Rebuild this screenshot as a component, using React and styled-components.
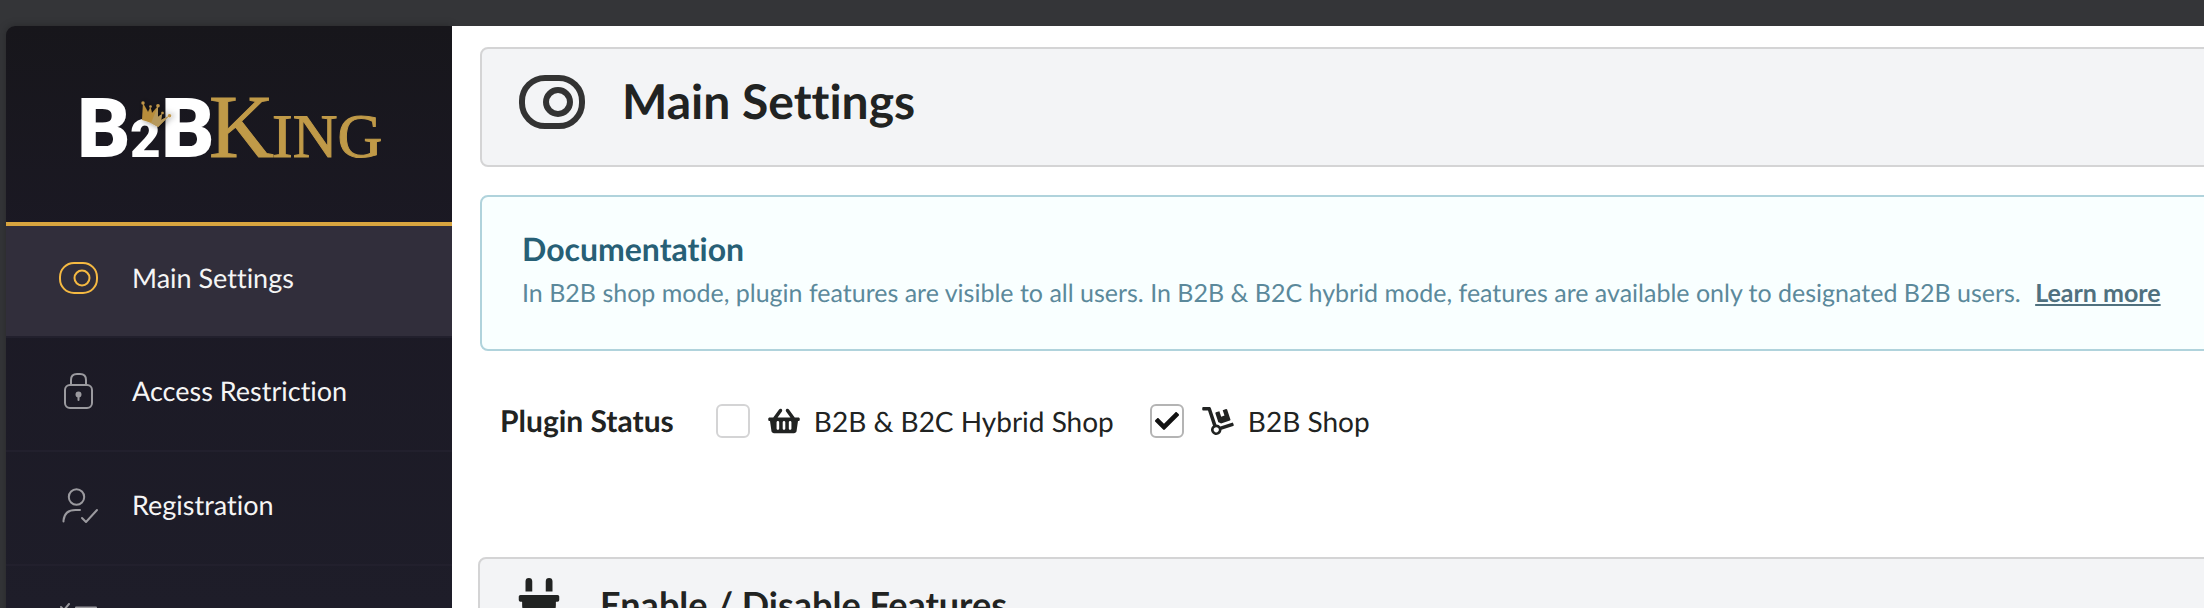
import React, { useState } from "react";
import styled, { createGlobalStyle } from "styled-components";
import { FaCheck, FaDolly, FaPlug, FaShoppingBasket } from "react-icons/fa";

const GlobalStyle = createGlobalStyle`
  * {
    box-sizing: border-box;
  }
  body {
    margin: 0;
    background: #343538;
    font-family: Lato, "Open Sans", sans-serif;
    font-variant-ligatures: none;
    text-rendering: geometricPrecision;
    color: #212322;
  }
  h1, h2, h3, p {
    margin: 0;
  }
`;

const Shell = styled.div`
  display: flex;
  height: 100vh;
  padding: 26px 0 0 6px;
  overflow: hidden;
`;

const Sidebar = styled.aside`
  flex: 0 0 446px;
  height: 1200px;
  border-top-left-radius: 9px;
  background: linear-gradient(#17161b, #1b1924 220px, #1e1d29 580px);
  box-shadow: 0 0 8px rgba(0, 0, 0, 0.25);
`;

const Brand = styled.div`
  display: flex;
  justify-content: center;
  height: 200px;
  padding-top: 32px;
  border-bottom: 4px solid #d8a53f;
  svg {
    width: 330px;
    height: 140px;
  }
  .sans {
    font-family: Roboto, sans-serif;
    font-weight: 900;
    fill: #fff;
  }
  .serif {
    font-family: "Liberation Serif", serif;
    fill: #c09a48;
    stroke: #c09a48;
  }
`;

const NavItem = styled.a`
  display: flex;
  align-items: center;
  height: ${(props) => (props.$active ? 112 : 114)}px;
  padding: 0 24px 6px 50px;
  border-bottom: 2px solid #22202d;
  background: ${(props) => (props.$active ? "#312e3b" : "transparent")};
  color: #f5f5f5;
  font-size: 27px;
  line-height: 32px;
  text-decoration: none;
  svg {
    width: 44px;
    height: 44px;
    margin-right: 32px;
    fill: none;
    stroke: ${(props) => (props.$active ? "#f5b942" : "#9b9a9f")};
    stroke-width: 2;
    stroke-linecap: round;
    stroke-linejoin: round;
  }
`;

const Main = styled.main`
  flex: 1 0 auto;
  width: calc(100% - 446px);
  height: 1200px;
  margin-right: -40px;
  padding: 21px 0 0 26px;
  background: #fff;
`;

const TitleCard = styled.header`
  display: flex;
  align-items: center;
  gap: 36px;
  margin-left: 2px;
  padding: 24px 36px 34px;
  border: 2px solid #d4d4d5;
  border-radius: 8px;
  background: #f3f4f6;
  h1 {
    font-size: 48px;
    line-height: 58px;
  }
  svg {
    width: 68px;
    height: 56px;
    fill: none;
    stroke: #333;
    stroke-width: 6;
  }
`;

const InfoCard = styled.section`
  margin: 28px 0 0 2px;
  padding: 32px 40px 40px;
  border: 2px solid #b0d3dc;
  border-radius: 8px;
  background: #f9ffff;
  color: #5b899b;
  h3 {
    margin-bottom: 8px;
    color: #276076;
    font-size: 32px;
    line-height: 40px;
  }
  p {
    font-size: 25px;
    line-height: 32px;
    white-space: nowrap;
  }
  a {
    margin-left: 8px;
    color: #50717f;
    font-weight: 700;
  }
`;

const StatusRow = styled.div`
  display: flex;
  align-items: center;
  margin: 53px 0 119px 22px;
  font-size: 28px;
  line-height: 34px;
  strong {
    margin-right: 42px;
    font-size: 30px;
  }
`;

const Option = styled.label`
  display: flex;
  align-items: center;
  margin-right: 36px;
  cursor: pointer;
  > svg {
    width: 32px;
    height: 28px;
    margin: 0 14px 0 18px;
  }
`;

const Tick = styled.span`
  display: grid;
  place-items: center;
  input {
    grid-area: 1 / 1;
    appearance: none;
    width: 34px;
    height: 34px;
    margin: 0;
    border: 2px solid #d4d4d5;
    border-radius: 6px;
    background: #fff;
    &:checked {
      border-color: #b4b4b4;
    }
  }
  svg {
    grid-area: 1 / 1;
    z-index: 1;
    width: 24px;
    height: 24px;
    color: #111;
    pointer-events: none;
  }
`;

const FeatureCard = styled.section`
  display: flex;
  align-items: flex-start;
  gap: 40px;
  padding: 19px 38px;
  border: 2px solid #d4d4d5;
  border-radius: 8px;
  background: #f3f4f6;
  h2 {
    padding-top: 4px;
    font-size: 36px;
    line-height: 44px;
  }
  svg {
    width: 42px;
    height: 54px;
  }
`;

const Logo = () => (
  <svg viewBox="0 -30 330 140" role="img" aria-label="B2BKing">
    <defs>
      <filter id="crownShadow" x="-50%" y="-50%" width="200%" height="200%">
        <feDropShadow dx="2" dy="0" stdDeviation="3" floodOpacity="0.6" />
      </filter>
    </defs>
    <text className="sans" x="13" y="69" fontSize="83">B</text>
    <text className="sans" x="66" y="69" fontSize="53">2</text>
    <text className="sans" x="97" y="69" fontSize="83">B</text>
    <text className="serif" x="145" y="69" fontSize="90">K</text>
    <text className="serif" x="208" y="69" fontSize="62">ING</text>
    <g filter="url(#crownShadow)" transform="translate(10 0)">
      <path
        d="M68 32 L69 15 L74 24 L76.500 19 L78 25 L84 18 L84 29 L88 26 L87 32 L95 28 L84 39 Q77 34 68 32z"
        fill="#b88d3b"
      />
      <path d="M77 35 L84 18 L84 29 L88 26 L87 32 L95 28 L84 39z" fill="#b5985c" />
      <g fill="#c0964a">
        <circle cx="69" cy="15" r="1.700" />
        <circle cx="76.500" cy="18.500" r="1.300" />
        <circle cx="84" cy="17.700" r="1.800" />
        <circle cx="88.500" cy="25" r="1.300" />
        <circle cx="95.500" cy="27.700" r="1.800" />
      </g>
    </g>
  </svg>
);

const ToggleIcon = () => (
  <svg viewBox="0 0 44 44">
    <rect x="4" y="7" width="37" height="30" rx="14" />
    <circle cx="26" cy="22" r="7.500" />
  </svg>
);

const LockIcon = () => (
  <svg viewBox="0 0 44 44">
    <rect x="9" y="16" width="27" height="23" rx="5" />
    <path d="M15 16v-5q0-6 6-6h3q6 0 6 6v5" />
    <circle cx="22.500" cy="25.500" r="2" fill="#9b9a9f" />
    <path d="M22.500 26v5" />
  </svg>
);

const UserCheckIcon = () => (
  <svg viewBox="0 0 44 44">
    <circle cx="20.500" cy="14" r="7.700" />
    <path d="M7.500 38.500v-1q1-10.500 12-10.500h4.500" />
    <path d="M26 35l4 4 11-12" />
  </svg>
);

const ListIcon = () => (
  <svg viewBox="0 0 44 44">
    <path d="M5 10l3 3 5-6M20 10.500h20M5 22l3 3 5-6M20 22.500h20M5 34l3 3 5-6M20 34.500h20" />
  </svg>
);

const menu = [
  { label: "Main Settings", icon: <ToggleIcon />, active: true },
  { label: "Access Restriction", icon: <LockIcon /> },
  { label: "Registration", icon: <UserCheckIcon /> },
  { label: "Bulk Order Form", icon: <ListIcon /> },
];

const modes = [
  { id: "hybrid", label: "B2B & B2C Hybrid Shop", icon: <FaShoppingBasket /> },
  { id: "b2b", label: "B2B Shop", icon: <FaDolly /> },
];

export default function App() {
  const [mode, setMode] = useState("b2b");

  return (
    <Shell>
      <GlobalStyle />
      <Sidebar>
        <Brand>
          <Logo />
        </Brand>
        <nav>
          {menu.map((item) => (
            <NavItem key={item.label} href="#" $active={item.active}>
              {item.icon}
              {item.label}
            </NavItem>
          ))}
        </nav>
      </Sidebar>

      <Main>
        <TitleCard>
          <svg viewBox="0 0 68 56">
            <rect x="4" y="4" width="60" height="48" rx="23" />
            <circle cx="40" cy="28" r="12" />
          </svg>
          <h1>Main Settings</h1>
        </TitleCard>

        <InfoCard>
          <h3>Documentation</h3>
          <p>
            In B2B shop mode, plugin features are visible to all users. In B2B
            &amp; B2C hybrid mode, features are available only to designated B2B
            users. <a href="#">Learn more</a>
          </p>
        </InfoCard>

        <StatusRow>
          <strong>Plugin Status</strong>
          {modes.map((item) => (
            <Option key={item.id}>
              <Tick>
                <input
                  type="checkbox"
                  checked={mode === item.id}
                  onChange={() => setMode(item.id)}
                />
                {mode === item.id ? <FaCheck /> : null}
              </Tick>
              {item.icon}
              {item.label}
            </Option>
          ))}
        </StatusRow>

        <FeatureCard>
          <FaPlug />
          <h2>Enable / Disable Features</h2>
        </FeatureCard>
      </Main>
    </Shell>
  );
}
